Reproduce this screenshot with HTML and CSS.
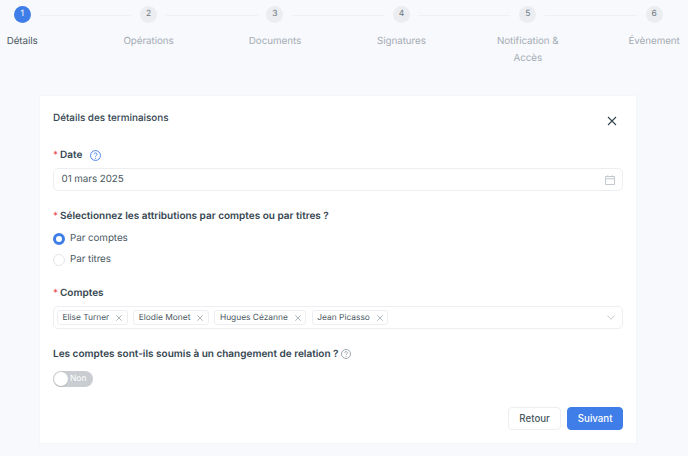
FILE: index.html
```html
<!DOCTYPE html>
<html lang="fr">
<head>
<meta charset="UTF-8" />
<title>Détails des terminaisons</title>
<link rel="stylesheet" href="styles.css">
</head>
<body>
  <ol class="steps">
    <li class="step active"><span class="step-num">1</span><span class="step-label">Détails</span></li>
    <li class="step"><span class="step-num">2</span><span class="step-label">Opérations</span></li>
    <li class="step"><span class="step-num">3</span><span class="step-label">Documents</span></li>
    <li class="step"><span class="step-num">4</span><span class="step-label">Signatures</span></li>
    <li class="step"><span class="step-num">5</span><span class="step-label">Notification &amp; Accès</span></li>
    <li class="step"><span class="step-num">6</span><span class="step-label">Évènement</span></li>
  </ol>

  <form class="card">
    <div class="card-head">
      <h2>Détails des terminaisons</h2>
      <svg class="close" width="10" height="10" viewBox="0 0 10 10"><path d="M1 1l8 8M9 1l-8 8" fill="none" stroke="#34454f" stroke-width="1.1"/></svg>
    </div>

    <div class="label date-label">
      <span class="req">*</span><span>Date</span>
      <svg class="help" width="11" height="11" viewBox="0 0 12 12"><circle cx="6" cy="6" r="5.4" fill="none" stroke="#3f7de8" stroke-width="1"/><path d="M4.400 4.700a1.600 1.600 0 1 1 2.400 1.400c-.5.3-.8.6-.8 1.200" fill="none" stroke="#3f7de8" stroke-width="1"/><circle cx="6" cy="9" r=".6" fill="#3f7de8"/></svg>
    </div>
    <div class="input">
      <span>01 mars 2025</span>
      <svg width="10" height="10" viewBox="0 0 10 10"><path d="M.5 1.500h9v8h-9zM.5 3.800h9M2.800.2v2M7.200.2v2" fill="none" stroke="#c3c9ce" stroke-width="1"/></svg>
    </div>

    <div class="label attr-label"><span class="req">*</span><span>Sélectionnez les attributions par comptes ou par titres ?</span></div>
    <div class="radios">
      <div class="radio-row"><span class="radio checked"></span>Par comptes</div>
      <div class="radio-row"><span class="radio"></span>Par titres</div>
    </div>

    <div class="label accounts-label"><span class="req">*</span><span>Comptes</span></div>
    <div class="input select">
      <div class="tags">
        <span class="tag">Elise Turner<svg width="6" height="6" viewBox="0 0 6 6"><path d="M.3.300l5.400 5.400M5.700.300l-5.400 5.400" stroke="#9aa3a9" stroke-width=".8"/></svg></span>
        <span class="tag">Elodie Monet<svg width="6" height="6" viewBox="0 0 6 6"><path d="M.3.300l5.400 5.400M5.700.300l-5.400 5.400" stroke="#9aa3a9" stroke-width=".8"/></svg></span>
        <span class="tag">Hugues Cézanne<svg width="6" height="6" viewBox="0 0 6 6"><path d="M.3.300l5.400 5.400M5.700.300l-5.400 5.400" stroke="#9aa3a9" stroke-width=".8"/></svg></span>
        <span class="tag">Jean Picasso<svg width="6" height="6" viewBox="0 0 6 6"><path d="M.3.300l5.400 5.400M5.700.300l-5.400 5.400" stroke="#9aa3a9" stroke-width=".8"/></svg></span>
      </div>
      <svg width="8" height="5" viewBox="0 0 8 5"><path d="M.4.500L4 4.300 7.600.500" fill="none" stroke="#c3c9ce" stroke-width="1"/></svg>
    </div>

    <div class="label relation-label">
      <span>Les comptes sont-ils soumis à un changement de relation ?</span>
      <svg class="help" width="10" height="10" viewBox="0 0 12 12"><circle cx="6" cy="6" r="5.4" fill="none" stroke="#8c969d" stroke-width="1"/><path d="M4.400 4.700a1.600 1.600 0 1 1 2.400 1.400c-.5.3-.8.6-.8 1.200" fill="none" stroke="#8c969d" stroke-width="1"/><circle cx="6" cy="9" r=".6" fill="#8c969d"/></svg>
    </div>
    <div class="switch"><span class="knob"></span>Non</div>

    <div class="actions">
      <button type="button" class="btn">Retour</button>
      <button type="button" class="btn primary">Suivant</button>
    </div>
  </form>
</body>
</html>
```

FILE: styles.css
```css
* {
  box-sizing: border-box;
}
html, body {
  height: 100%;
  overflow: hidden;
}
body {
  margin: 0;
  background: #f8f9fd;
  color: #34454f;
  font-family: Inter, "Liberation Sans", sans-serif;
  font-size: 9.8px;
  letter-spacing: -.05px;
  text-rendering: geometricPrecision;
}

/* Stepper */
.steps {
  display: grid;
  grid-template-columns: repeat(6, 126.4px);
  width: 758.4px;
  margin: 0 0 0 -41px;
  padding: 6px 0 0;
  list-style: none;
}
.step {
  position: relative;
  display: flex;
  flex-direction: column;
  align-items: center;
  text-align: center;
}
.step:not(:last-child)::after {
  content: "";
  position: absolute;
  top: 9px;
  left: calc(50% + 17px);
  width: 92px;
  height: 1px;
  background: #eef0f3;
}
.step-num {
  width: 17px;
  height: 17px;
  border-radius: 50%;
  background: #ebedf0;
  color: #6d7a83;
  font-size: 8.500px;
  line-height: 17px;
}
.step-label {
  width: 75px;
  margin-top: 10px;
  color: #a4acb3;
  line-height: 17px;
}
.step.active .step-num {
  background: #3f7de8;
  color: #fff;
}
.step.active .step-label {
  color: #4a5862;
}

/* Card */
.card {
  width: 598px;
  height: 349px;
  margin: 28px 0 0 39px;
  padding: 14px 13px 0;
  background: #fff;
  border: 1px solid #f5f6f9;
}
.card-head {
  display: flex;
  justify-content: space-between;
  align-items: flex-start;
}
.card-head h2 {
  margin: 1px 0 0;
  font-size: 9.900px;
  font-weight: 500;
  letter-spacing: 0;
  line-height: 14px;
}
.close {
  margin: 6px 6px 0 0;
}
.label {
  display: flex;
  align-items: center;
  font-size: 10px;
  font-weight: 600;
  letter-spacing: 0;
  line-height: 14px;
}
.req {
  width: 7px;
  color: #e5484d;
  font-weight: 400;
}
.help {
  margin-left: 3px;
}
.date-label {
  margin-top: 22px;
}
.date-label .help {
  margin-left: 8px;
}
.input {
  display: flex;
  justify-content: space-between;
  align-items: center;
  height: 23px;
  margin-top: 6px;
  padding: 0 7px 0 7.5px;
  border: 1px solid #eceef1;
  border-radius: 5px;
  color: #4a5862;
}
.attr-label {
  margin-top: 18px;
}
.radios {
  margin-top: 5px;
}
.radio-row {
  display: flex;
  align-items: center;
  gap: 5px;
  height: 21px;
  color: #4a5862;
}
.radio {
  width: 12px;
  height: 12px;
  border: 1px solid #e3e6ea;
  border-radius: 50%;
}
.radio.checked {
  border: 3.5px solid #3f7de8;
}
.accounts-label {
  margin-top: 16px;
}
.select {
  padding-left: 3px;
}
.tags {
  display: flex;
  gap: 5.500px;
}
.tag {
  display: flex;
  align-items: center;
  gap: 7px;
  height: 15px;
  padding: 0 4.500px;
  border: 1px solid #eceef1;
  border-radius: 3px;
  font-size: 8.400px;
  letter-spacing: 0;
}
.relation-label {
  margin-top: 18px;
}
.switch {
  position: relative;
  display: flex;
  align-items: center;
  width: 40px;
  height: 16px;
  margin-top: 10px;
  padding-left: 17px;
  border-radius: 8px;
  background: #c9cdd1;
  color: #fff;
  font-size: 8.500px;
}
.knob {
  position: absolute;
  top: 1px;
  left: 1px;
  width: 14px;
  height: 14px;
  border-radius: 50%;
  background: #fff;
  box-shadow: 0 1px 1px rgb(0 0 0 / 0.12);
}
.actions {
  display: flex;
  justify-content: flex-end;
  gap: 6px;
  margin-top: 20px;
}
.btn {
  height: 23px;
  padding: 0 10.500px;
  background: #fff;
  border: 1px solid #eceef1;
  border-radius: 4px;
  color: #4a5862;
  font-family: inherit;
  font-size: 9.700px;
  font-weight: 500;
}
.btn.primary {
  padding: 0 9.500px;
  background: #3f7de8;
  border-color: #3f7de8;
  color: #fff;
}
```
